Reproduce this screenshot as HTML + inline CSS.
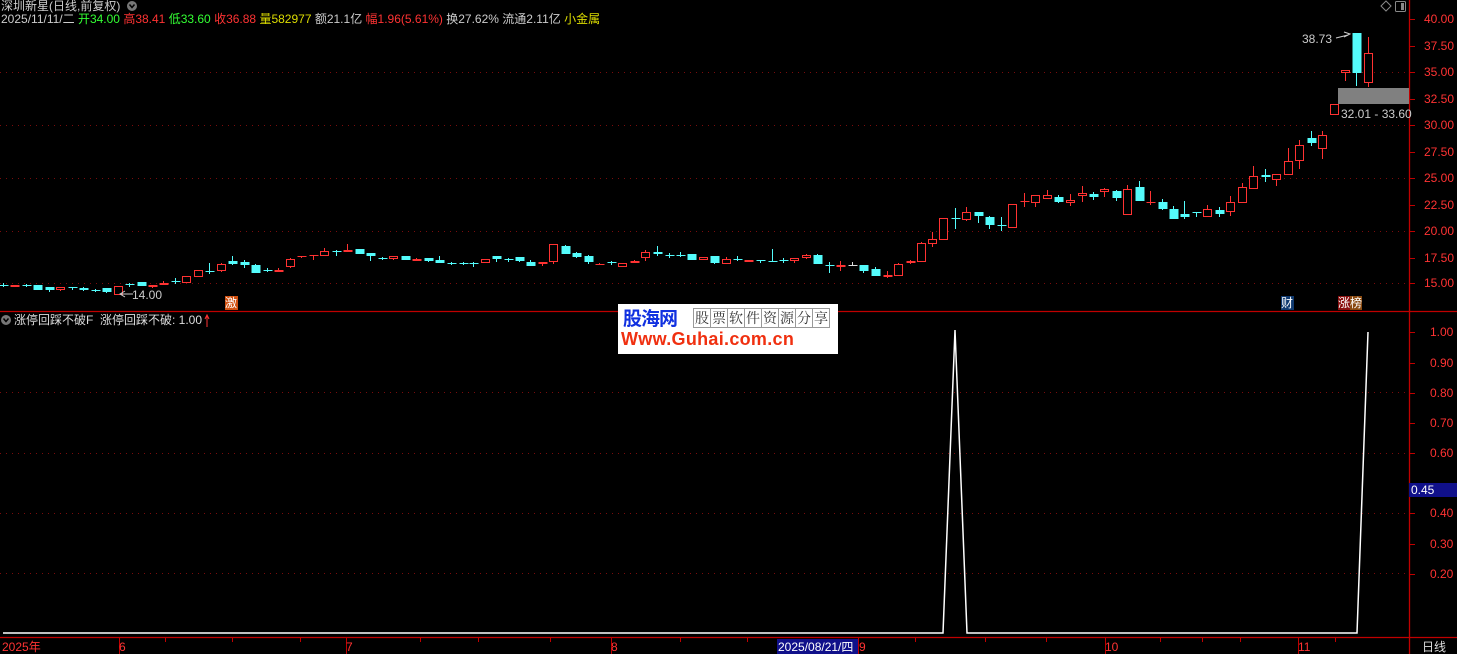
<!DOCTYPE html>
<html><head><meta charset="utf-8"><style>
body{margin:0;background:#000;width:1457px;height:654px;overflow:hidden;font-family:"Liberation Sans","Noto Sans CJK SC",sans-serif;}
svg{position:absolute;left:0;top:0}
.t{position:absolute;font-size:12px;white-space:nowrap;line-height:14px}
.w{border:1px solid #999;border-right:none;font:14px 'Noto Serif CJK SC',serif;width:16px;height:18px;line-height:18px;text-align:center;color:#333}
</style></head><body>
<svg id="s" width="1457" height="654" xmlns="http://www.w3.org/2000/svg">
<g stroke="#7a0c0c" stroke-dasharray="1,5" stroke-width="1">
<line x1="0" y1="72.5" x2="1409" y2="72.5"/><line x1="0" y1="125.5" x2="1409" y2="125.5"/><line x1="0" y1="178.5" x2="1409" y2="178.5"/><line x1="0" y1="231.5" x2="1409" y2="231.5"/><line x1="0" y1="283.5" x2="1409" y2="283.5"/>
<line x1="0" y1="392.5" x2="1409" y2="392.5"/><line x1="0" y1="453.5" x2="1409" y2="453.5"/><line x1="0" y1="513.5" x2="1409" y2="513.5"/><line x1="0" y1="573.5" x2="1409" y2="573.5"/>
</g>
<g stroke="#c00000" stroke-width="1.3">
<line x1="1409.5" y1="0" x2="1409.5" y2="654"/>
<line x1="0" y1="311.5" x2="1457" y2="311.5"/>
<line x1="0" y1="637.5" x2="1457" y2="637.5"/>
</g>
<g id="ticks" stroke="#c00000"></g>
<g id="c"></g>
<rect x="1338" y="88" width="71" height="16" fill="#808080"/>
<polyline points="3,633 943,633 955,330 967,633 1357,633 1368,332" fill="none" stroke="#fff" stroke-width="1.5"/>
<polyline points="1336,38 1348,35" stroke="#ccc" fill="none"/><path d="M1344,32 L1350,34 L1344,37" stroke="#ccc" fill="none"/>
<path d="M121,294 L133,294" stroke="#ccc"/><path d="M125,291 L120,294 L125,297" stroke="#ccc" fill="none"/>
<path d="M1381,6 L1386,1 L1391,6 L1386,11Z" stroke="#888" fill="none"/>
<rect x="1395.5" y="1.5" width="10" height="10" rx="1" stroke="#888" fill="none"/><rect x="1401" y="3" width="3" height="7" fill="#888"/>
<circle cx="132" cy="6" r="5" fill="#777"/><path d="M129.5,4.5 L132,7.5 L134.5,4.5" stroke="#000" stroke-width="1.5" fill="none"/>
<circle cx="6" cy="320" r="5" fill="#777"/><path d="M3.5,318.5 L6,321.5 L8.5,318.5" stroke="#000" stroke-width="1.5" fill="none"/>
<path d="M207,327 L207,316 M205,319 L207,315 L209,319" stroke="#f33" fill="none"/>
<rect x="225" y="296" width="13" height="14" fill="#d05010"/>
<rect x="1281" y="296" width="13" height="14" fill="#103a70"/>
<rect x="1338" y="296" width="12" height="14" fill="#8a1010"/><rect x="1350" y="296" width="12" height="14" fill="#8a4a10"/>
<rect x="777" y="639" width="81" height="15" fill="#10108a"/>
<rect x="1409" y="483" width="48" height="14" fill="#10108a"/>
</svg>
<div class="t" style="left:1px;top:-1px;color:#ccc">深圳新星(日线,前复权)</div>
<div class="t" style="left:1px;top:12px;color:#ccc">2025/11/11/二 <span style="color:#3f3">开34.00</span> <span style="color:#f33">高38.41</span> <span style="color:#3f3">低33.60</span> <span style="color:#f33">收36.88</span> <span style="color:#dd0">量582977</span> 额21.1亿 <span style="color:#f33">幅1.96(5.61%)</span> 换27.62% 流通2.11亿 <span style="color:#dd0">小金属</span></div>
<div class="t" style="left:14px;top:313px;color:#ddd">涨停回踩不破F &nbsp;涨停回踩不破: 1.00</div>
<div class="t" style="left:132px;top:288px;color:#ccc">14.00</div>
<div class="t" style="left:1302px;top:32px;color:#ccc">38.73</div>
<div class="t" style="left:1341px;top:107px;color:#ccc">32.01 - 33.60</div>
<div class="t" style="left:225px;top:296px;color:#fff">激</div>
<div class="t" style="left:1281px;top:296px;color:#fff">财</div>
<div class="t" style="left:1338px;top:296px;color:#fff">涨榜</div>
<div id="ax"></div>
<div class="t" style="left:1411px;top:483px;color:#fff">0.45</div>
<div class="t" style="left:2px;top:640px;color:#f33">2025年</div>
<div class="t" style="left:119px;top:640px;color:#f33">6</div>
<div class="t" style="left:346px;top:640px;color:#f33">7</div>
<div class="t" style="left:611px;top:640px;color:#f33">8</div>
<div class="t" style="left:778px;top:640px;color:#fff">2025/08/21/四</div>
<div class="t" style="left:859px;top:640px;color:#f33">9</div>
<div class="t" style="left:1105px;top:640px;color:#f33">10</div>
<div class="t" style="left:1298px;top:640px;color:#f33">11</div>
<div class="t" style="left:1422px;top:640px;color:#ddd">日线</div>
<div style="position:absolute;left:618px;top:304px;width:220px;height:50px;background:#fff">
<div style="position:absolute;left:5px;top:0px;font:bold 19px 'Noto Sans CJK SC',sans-serif;color:#1030e0;letter-spacing:-1px">股海网</div>
<div style="position:absolute;left:75px;top:4px;display:flex;border-right:1px solid #999">
<span class="w">股</span><span class="w">票</span><span class="w">软</span><span class="w">件</span><span class="w">资</span><span class="w">源</span><span class="w">分</span><span class="w">享</span>
</div>
<div style="position:absolute;left:3px;top:25px;font:bold 18px 'Liberation Sans',sans-serif;color:#f03010;letter-spacing:0.3px">Www.Guhai.com.cn</div>
</div>
<script>
var C='#54fcfc',R='#ff3232',W='#ddd';
var d=[
[3,285,286,283,287,C],[14,285,287,285,287,R],[26,285,286,284,287,C],[37,285,290,285,290,C],[49,287,290,287,292,C],[60,287,290,287,291,R],[72,287,288,287,290,C],[83,288,290,287,291,C],[95,290,291,289,292,C],[106,288,292,288,293,C],[118,286,295,286,295,R],[129,284,285,283,287,C],[141,282,286,282,286,C],[152,285,287,285,288,R],[163,283,285,281,285,R],[175,281,282,278,284,C],[186,276,283,276,283,R],[198,270,277,270,277,R],[209,271,272,263,274,C],[221,264,271,263,272,R],[232,261,264,256,265,C],[244,262,265,260,268,C],[255,265,273,264,273,C],[267,270,271,268,272,C],[278,270,272,268,272,R],[290,259,267,258,268,R],[301,256,257,256,258,R],[313,255,256,255,260,R],[324,251,256,248,256,R],[336,251,252,250,256,C],[347,250,252,244,252,R],[359,249,254,249,254,C],[370,253,256,253,261,C],[382,258,259,257,260,C],[393,256,259,256,260,R],[405,256,260,256,260,C],[416,259,261,258,261,R],[428,258,261,258,262,C],[439,260,263,256,263,C],[451,263,264,262,265,C],[463,263,264,262,265,C],
[473,263,264,262,267,C],[485,259,263,259,263,R],[496,256,259,256,262,C],[508,259,260,258,262,C],[519,257,261,257,262,C],[530,262,266,260,266,C],[542,262,264,262,266,R],[553,244,262,244,264,R],[565,246,254,245,254,C],[576,253,257,252,258,C],[588,256,262,255,264,C],[599,264,265,263,265,R],[611,262,263,261,265,C],[622,263,267,263,267,R],[634,261,263,260,263,R],[645,252,258,250,261,R],[657,252,254,246,256,C],[669,255,256,253,258,C],[680,255,256,252,257,C],[691,254,260,254,260,C],[703,257,260,257,260,R],[714,256,263,256,264,C],[726,259,264,257,264,R],[737,259,260,256,261,C],[748,260,262,260,262,R],[760,260,261,260,263,C],[772,261,262,249,262,C],[783,260,261,258,263,C],[794,258,261,258,263,R],[806,255,258,254,259,R],[817,255,264,254,264,C],[829,265,266,262,273,C],[840,265,267,261,271,R],[852,265,266,262,266,W],[863,265,271,265,273,C],[875,269,276,267,276,C],[887,275,277,271,278,R],[898,264,276,263,276,R],[910,261,263,260,264,R],[921,243,262,242,262,R],
[932,239,244,232,247,R],[943,218,240,218,240,R],[955,218,219,208,229,C],[966,212,220,207,221,R],[978,212,216,212,223,C],[989,217,225,216,229,C],[1001,225,226,217,231,C],[1012,204,228,204,228,R],[1024,201,202,193,207,R],[1035,195,203,195,207,R],[1047,195,199,190,199,R],[1058,197,202,195,203,C],[1070,200,203,194,206,R],[1082,193,196,186,202,R],[1093,194,197,192,200,C],[1104,189,192,188,197,R],[1116,191,198,190,201,C],[1127,189,215,185,215,R],[1139,187,201,181,201,C],[1150,202,203,191,205,R],[1162,202,209,199,210,C],[1173,209,219,206,219,C],[1184,214,217,201,219,C],[1196,212,213,212,217,C],[1207,209,217,205,217,R],[1219,210,214,207,217,C],[1230,202,212,196,216,R],[1242,187,203,183,203,R],[1253,176,189,166,189,R],[1265,175,177,169,182,C],[1276,174,180,174,186,R],[1288,161,175,148,175,R],[1299,145,161,140,169,R],[1311,138,143,131,146,C],[1322,135,149,131,159,R],[1334,104,115,104,115,R],[1345,70,73,70,81,R],[1356,33,73,33,86,C],[1368,53,83,37,87,R]];
var g='';d.forEach(function(a){var x=a[0],c=a[5];g+='<line x1="'+(x+.5)+'" y1="'+a[3]+'" x2="'+(x+.5)+'" y2="'+a[4]+'" stroke="'+c+'"/>';var h=Math.max(1,a[2]-a[1]);if(c==R&&h>2)g+='<rect x="'+(x-3.5)+'" y="'+(a[1]+.5)+'" width="8" height="'+(h-1)+'" fill="#000" stroke="'+R+'"/>';else g+='<rect x="'+(x-3.5)+'" y="'+a[1]+'" width="9" height="'+h+'" fill="'+c+'"/>';});
document.getElementById('c').innerHTML=g;
var ax='',tk='';
[['40.00',19],['37.50',46],['35.00',72],['32.50',99],['30.00',125],['27.50',152],['25.00',178],['22.50',205],['20.00',231],['17.50',258],['15.00',283],['1.00',332],['0.90',363],['0.80',393],['0.70',423],['0.60',453],['0.40',513],['0.30',544],['0.20',574]].forEach(function(a){ax+='<div class="t" style="left:'+(a[0].length>4?1424:1430)+'px;top:'+(a[1]-7)+'px;color:#f33">'+a[0]+'</div>';tk+='<line x1="1409" y1="'+(a[1]+.5)+'" x2="1415" y2="'+(a[1]+.5)+'"/>';});
[119,165,232,300,346,420,478,550,611,680,747,858,915,985,1046,1105,1160,1202,1240,1298,1335].forEach(function(x){tk+='<line x1="'+(x+.5)+'" y1="638" x2="'+(x+.5)+'" y2="'+(x==119||x==346||x==611||x==858||x==1105||x==1298?654:642)+'"/>';});
document.getElementById('ax').innerHTML=ax;document.getElementById('ticks').innerHTML=tk;
</script>
</body></html>
